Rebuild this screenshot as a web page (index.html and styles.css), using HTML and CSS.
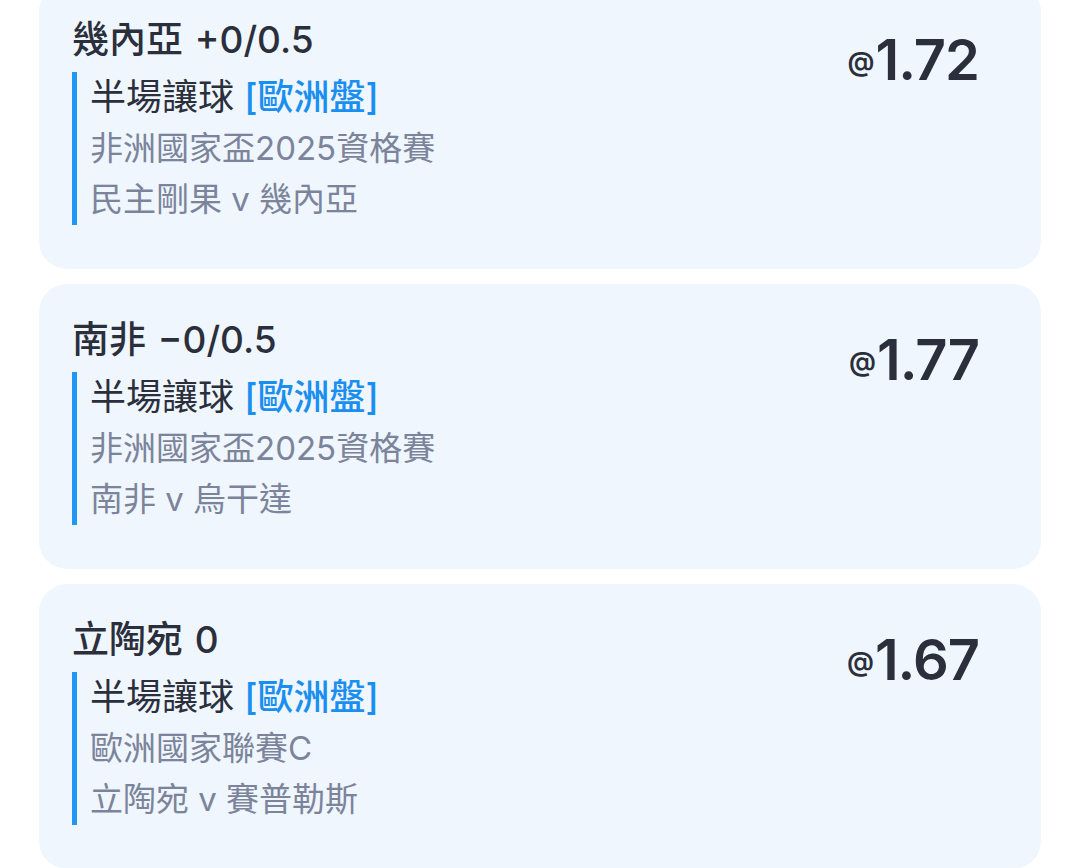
FILE: index.html
```html
<!doctype html>
<html lang="zh-Hant">
    <head>
        <meta charset="UTF-8" />
        <meta name="viewport" content="width=device-width, initial-scale=1.0" />
        <title>投注單</title>
        <link rel="stylesheet" href="styles.css">
    </head>
    <body>
        <div class="bet-list">
            <div class="bet-card">
                <div class="bet-main">
                    <div class="bet-pick">幾內亞 +0/0.5</div>
                    <div class="bet-info">
                        <div class="bet-market">半場讓球 <span class="bet-tag">[歐洲盤]</span></div>
                        <div class="bet-line">非洲國家盃2025資格賽</div>
                        <div class="bet-line">民主剛果 v 幾內亞</div>
                    </div>
                </div>
                <div class="bet-odds"><span class="at">@</span>1.72</div>
            </div>

            <div class="bet-card">
                <div class="bet-main">
                    <div class="bet-pick">南非 −0/0.5</div>
                    <div class="bet-info">
                        <div class="bet-market">半場讓球 <span class="bet-tag">[歐洲盤]</span></div>
                        <div class="bet-line">非洲國家盃2025資格賽</div>
                        <div class="bet-line">南非 v 烏干達</div>
                    </div>
                </div>
                <div class="bet-odds"><span class="at">@</span>1.77</div>
            </div>

            <div class="bet-card">
                <div class="bet-main">
                    <div class="bet-pick">立陶宛 0</div>
                    <div class="bet-info">
                        <div class="bet-market">半場讓球 <span class="bet-tag">[歐洲盤]</span></div>
                        <div class="bet-line">歐洲國家聯賽C</div>
                        <div class="bet-line">立陶宛 v 賽普勒斯</div>
                    </div>
                </div>
                <div class="bet-odds"><span class="at">@</span>1.67</div>
            </div>
        </div>
    </body>
</html>
```

FILE: styles.css
```css
body {
    margin: 0;
    padding: 0;
    background: #fff;
    font-family: "Inter", "Noto Sans CJK TC", sans-serif;
    color: #2b2f3c;
    overflow: hidden;
}
.bet-list {
    display: flex;
    flex-direction: column;
    gap: 15px;
    padding: 0 39px;
    margin-top: -16px;
}
.bet-card {
    display: flex;
    justify-content: space-between;
    align-items: flex-start;
    height: 285px;
    box-sizing: border-box;
    padding: 32px 62px 0 33px;
    background: #eff6fe;
    border-radius: 28px;
}
.bet-pick {
    font-size: 37px;
    line-height: 48px;
    font-weight: 500;
    color: #2b2f3c;
    word-spacing: 2px;
}
.bet-info {
    margin-top: 8px;
    border-left: 5px solid #2196f3;
    padding-left: 13px;
}
.bet-market {
    font-size: 36px;
    line-height: 51px;
    color: #2b2f3c;
}
.bet-tag {
    color: #1a8ff0;
    font-weight: 500;
}
.bet-line {
    font-size: 33px;
    line-height: 51px;
    color: #7c849b;
}
.bet-odds {
    display: flex;
    align-items: center;
    font-size: 56px;
    font-weight: 600;
    line-height: 68px;
    margin-top: 8px;
    color: #2b2f3c;
    letter-spacing: -1px;
}
.bet-odds .at {
    font-size: 27px;
    font-weight: 600;
    margin: 4px 2px 0 0;
}
```
